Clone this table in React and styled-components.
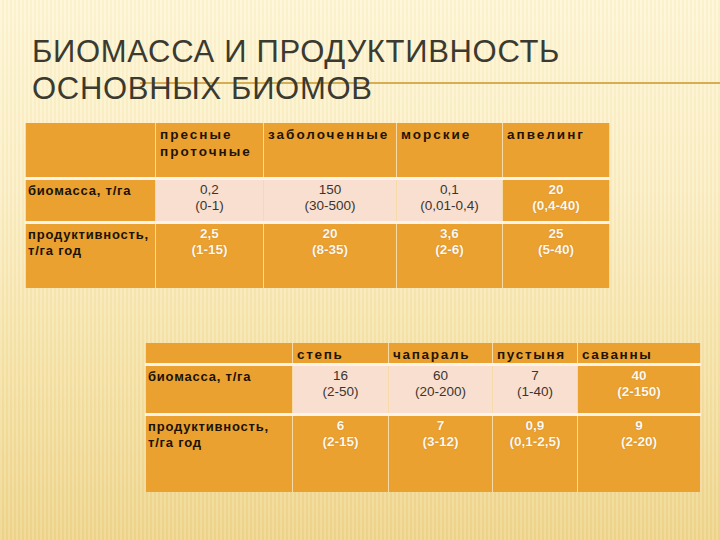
import React from 'react'
import styled, { createGlobalStyle } from 'styled-components'

const GlobalStyle = createGlobalStyle`
  html, body {
    margin: 0;
    padding: 0;
  }
  body {
    font-family: "Liberation Sans", Arial, sans-serif;
  }
`

const Slide = styled.div`
  width: 720px;
  height: 540px;
  overflow: hidden;
  box-sizing: border-box;
  padding: 33px 0 0 0;
  background:
    repeating-linear-gradient(90deg, rgba(255,255,255,0.12) 0 2px, rgba(200,160,60,0.06) 2px 4px),
    linear-gradient(180deg, #fef6d6 0%, #fbefc6 35%, #f5e2a6 70%, #efd58c 100%);
`

const Title = styled.h1`
  position: relative;
  margin: 0 0 16px 32px;
  font-family: "Liberation Sans", Arial, sans-serif;
  font-weight: normal;
  font-size: 31px;
  line-height: 37px;
  color: #3b3a30;
  letter-spacing: 0.7px;
  span {
    position: relative;
    z-index: 1;
  }
`

const TitleRule = styled.div`
  position: absolute;
  left: 108px;
  right: 0;
  top: 49px;
  height: 2px;
  background: #d6ad52;
`

const Table = styled.table`
  border-collapse: collapse;
  table-layout: fixed;
  margin-left: ${p => p.$left}px;
  margin-top: ${p => p.$top || 0}px;
  font-family: "Liberation Sans", Arial, sans-serif;
  font-size: 12px;
`

const Row = styled.tr`
  height: ${p => p.$h}px;
`

const Cell = styled.td`
  padding: 0;
  vertical-align: top;
  box-sizing: border-box;
  border-left: 1px solid #f6dba8;
  border-right: 1px solid #f6dba8;
  border-top: ${p => (p.$gap ? '3px solid #fdf3ea' : 'none')};
  background: ${p => (p.$light ? '#f9dfcf' : '#eba12f')};
`

const Head = styled.div`
  padding: 3px 0 0 4px;
  font-weight: bold;
  font-size: 13.5px;
  line-height: 17px;
  letter-spacing: ${p => p.$ls}px;
  color: #1e1408;
`

const Label = styled.div`
  padding: 3px 0 0 2px;
  font-weight: bold;
  font-size: 13px;
  line-height: 16px;
  letter-spacing: 0.8px;
  color: #1a1206;
`

const Value = styled.div`
  padding-top: 2px;
  text-align: center;
  line-height: 16px;
  font-size: 13.5px;
  color: ${p => (p.$light ? '#3a3530' : '#fff8ee')};
  font-weight: ${p => (p.$light ? 'normal' : 'bold')};
  text-shadow: ${p => (p.$light ? 'none' : '0 0 1px rgba(150,90,20,0.6)')};
`

function DataCell({ top, bottom, light }) {
  return (
    <Cell $light={light} $gap>
      <Value $light={light}>
        {top}
        <br />
        {bottom}
      </Value>
    </Cell>
  )
}

const t1 = {
  widths: [130, 108, 133, 106, 107],
  heads: [['пресные', 'проточные'], ['заболоченные'], ['морские'], ['апвелинг']],
  ls: 2,
  rows: [
    {
      h: 44,
      label: ['биомасса, т/га'],
      cells: [['0,2', '(0-1)', true], ['150', '(30-500)', true], ['0,1', '(0,01-0,4)', true], ['20', '(0,4-40)', false]]
    },
    {
      h: 66,
      label: ['продуктивность,', 'т/га год'],
      cells: [['2,5', '(1-15)'], ['20', '(8-35)'], ['3,6', '(2-6)'], ['25', '(5-40)']]
    }
  ],
  headH: 55
}

const t2 = {
  widths: [147, 96, 104, 85, 123],
  heads: [['степь'], ['чапараль'], ['пустыня'], ['саванны']],
  ls: 1.7,
  rows: [
    {
      h: 50,
      label: ['биомасса, т/га'],
      cells: [['16', '(2-50)', true], ['60', '(20-200)', true], ['7', '(1-40)', true], ['40', '(2-150)', false]]
    },
    {
      h: 77,
      label: ['продуктивность,', 'т/га год'],
      cells: [['6', '(2-15)'], ['7', '(3-12)'], ['0,9', '(0,1-2,5)'], ['9', '(2-20)']]
    }
  ],
  headH: 20
}

function BiomeTable({ data, left, top }) {
  return (
    <Table $left={left} $top={top} style={{ width: data.widths.reduce((a, b) => a + b, 0) }}>
      <colgroup>
        {data.widths.map((w, i) => (
          <col key={i} style={{ width: w }} />
        ))}
      </colgroup>
      <tbody>
        <Row $h={data.headH}>
          <Cell />
          {data.heads.map((h, i) => (
            <Cell key={i}>
              <Head $ls={data.ls}>
                {h.map((line, j) => (
                  <div key={j}>{line}</div>
                ))}
              </Head>
            </Cell>
          ))}
        </Row>
        {data.rows.map((r, i) => (
          <Row key={i} $h={r.h}>
            <Cell $gap>
              <Label>
                {r.label.map((line, j) => (
                  <div key={j}>{line}</div>
                ))}
              </Label>
            </Cell>
            {r.cells.map((c, j) => (
              <DataCell key={j} top={c[0]} bottom={c[1]} light={c[2]} />
            ))}
          </Row>
        ))}
      </tbody>
    </Table>
  )
}

export default function App() {
  return (
    <>
      <GlobalStyle />
      <Slide>
        <Title>
          <TitleRule />
          <span>БИОМАССА И ПРОДУКТИВНОСТЬ</span>
          <br />
          <span>ОСНОВНЫХ БИОМОВ</span>
        </Title>
        <BiomeTable data={t1} left={25} />
        <BiomeTable data={t2} left={145} top={55} />
      </Slide>
    </>
  )
}
